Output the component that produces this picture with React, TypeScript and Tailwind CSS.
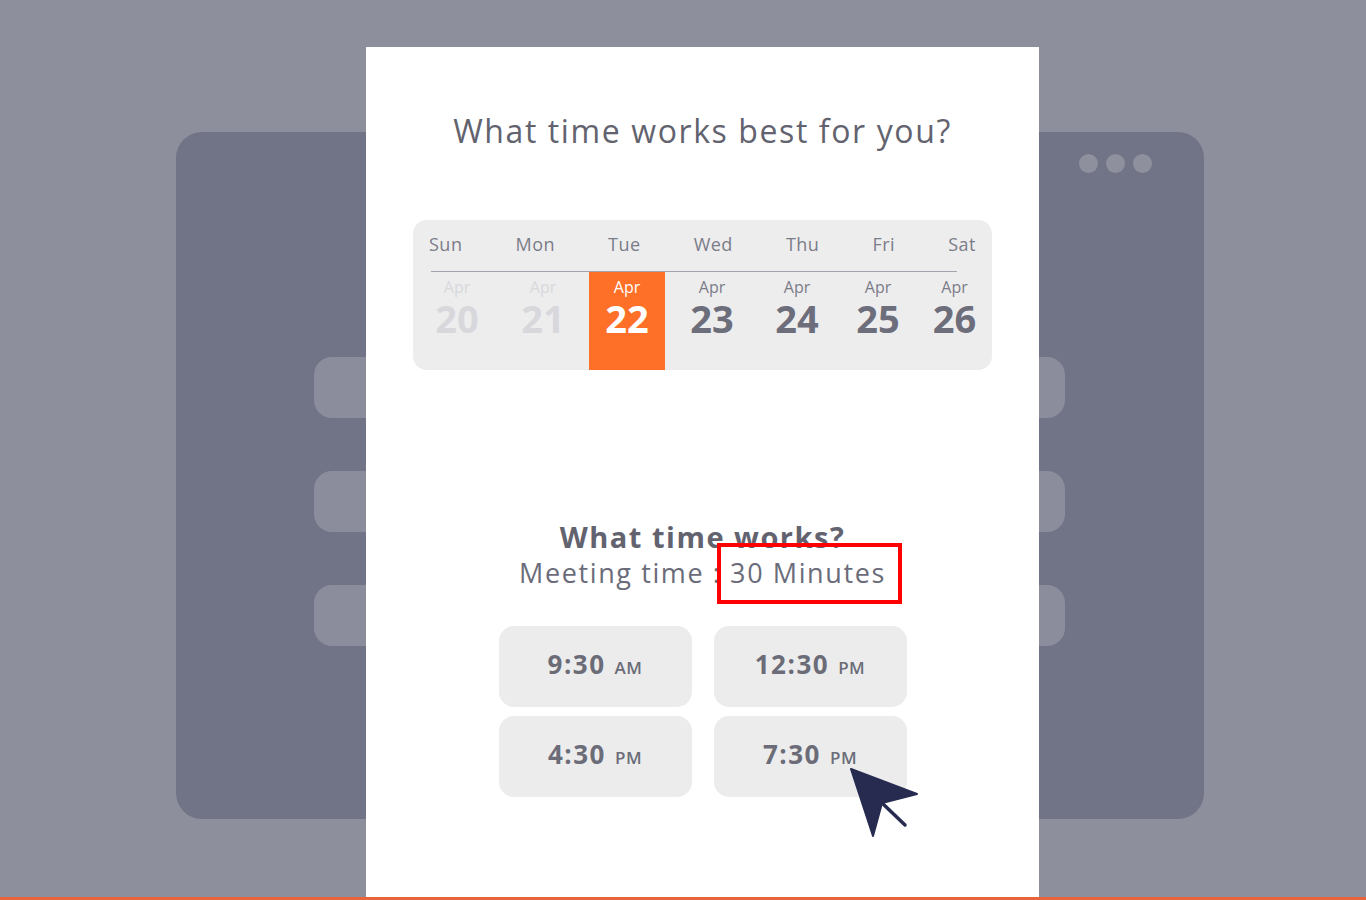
import React from "react";

const days = ["Sun", "Mon", "Tue", "Wed", "Thu", "Fri", "Sat"];

const dates = [
  { n: "20", state: "past" },
  { n: "21", state: "past" },
  { n: "22", state: "active" },
  { n: "23", state: "open" },
  { n: "24", state: "open" },
  { n: "25", state: "open" },
  { n: "26", state: "open" },
];

const slots = [
  { time: "9:30", ampm: "AM" },
  { time: "12:30", ampm: "PM" },
  { time: "4:30", ampm: "PM" },
  { time: "7:30", ampm: "PM" },
];

function Cursor() {
  return (
    <svg className="absolute left-[482px] top-[719px] w-[76px] h-[76px]" viewBox="0 0 76 76">
      <line x1="33" y1="36" x2="57" y2="59" stroke="#262b4f" strokeWidth="3.5" strokeLinecap="round" />
      <polygon points="3,3 69,28 34,37 25,70" fill="#262b4f" stroke="#262b4f" strokeWidth="2" strokeLinejoin="round" />
    </svg>
  );
}

export default function App() {
  return (
    <div
      className="relative h-[900px] w-full overflow-hidden bg-[#8e8f9c]"
      style={{ fontFamily: '"Open Sans", "Liberation Sans", sans-serif' }}
    >
      {/* backdrop window */}
      <div className="absolute left-[176px] top-[132px] w-[1028px] h-[687px] rounded-[26px] bg-[#717387]">
        <div className="absolute right-[52px] top-[22px] flex gap-[8px]">
          <span className="w-[19px] h-[19px] rounded-full bg-[#8e909e]" />
          <span className="w-[19px] h-[19px] rounded-full bg-[#8e909e]" />
          <span className="w-[19px] h-[19px] rounded-full bg-[#8e909e]" />
        </div>
        <div className="absolute left-[138px] top-[225px] flex flex-col gap-[53px]">
          <div className="w-[751px] h-[61px] rounded-[18px] bg-[#8c8d9c]" />
          <div className="w-[751px] h-[61px] rounded-[18px] bg-[#8c8d9c]" />
          <div className="w-[751px] h-[61px] rounded-[18px] bg-[#8c8d9c]" />
        </div>
      </div>

      <div className="pt-[47px] pl-[366px]">
        <div className="relative w-[673px] h-[853px] bg-white flex flex-col items-center">
          <h1 className="pt-[66px] text-[32px] leading-[36px] font-medium tracking-[1.6px] text-[#62636f]">
            What time works best for you?
          </h1>

          {/* calendar */}
          <div className="mt-[71px] w-[579px] h-[150px] rounded-[14px] bg-[#ededee] overflow-hidden">
            <div className="flex justify-between px-[16px] pt-[12px] pb-[15px] text-[18px] leading-[24px] tracking-[0.5px] text-[#7b7c88]">
              {days.map((d) => (
                <span key={d}>{d}</span>
              ))}
            </div>
            <div className="ml-[18px] mr-[35px] h-px bg-[#a3a4ad]" />
            <div className="grid grid-cols-[88px_84px_84px_86px_84px_78px_75px] h-[98px]">
              {dates.map((d) => (
                <div
                  key={d.n}
                  className={
                    d.state === "active"
                      ? "mx-[4px] bg-[#fe6f27] flex flex-col items-center text-white"
                      : d.state === "past"
                      ? "flex flex-col items-center text-[#d8d8dc]"
                      : "flex flex-col items-center text-[#6d6e7b]"
                  }
                >
                  <span
                    className={
                      d.state === "open"
                        ? "mt-[6px] text-[16px] leading-[18px] text-[#7b7c88]"
                        : "mt-[6px] text-[16px] leading-[18px]"
                    }
                  >
                    Apr
                  </span>
                  <span className="mt-[2px] text-[38px] leading-[40px] font-bold">{d.n}</span>
                </div>
              ))}
            </div>
          </div>

          <h2 className="mt-[150px] text-[29px] leading-[34px] font-bold tracking-[1.5px] text-[#62636f]">
            What time works?
          </h2>
          <p className="mt-[3px] text-[27px] leading-[32px] font-medium tracking-[1.6px] text-[#6b6c7a]">
            Meeting time : 30 Minutes
          </p>

          <div className="mt-[37px] grid grid-cols-[193px_193px] gap-x-[22px] gap-y-[9px]">
            {slots.map((s) => (
              <button
                key={s.time}
                type="button"
                className="h-[81px] rounded-[15px] bg-[#ececed] flex items-baseline justify-center gap-[9px] pt-[22px] text-[#6b6c78]"
              >
                <span className="text-[26px] leading-[32px] font-bold tracking-[1.5px]">{s.time}</span>
                <span className="text-[17px] font-semibold tracking-[0.5px]">{s.ampm}</span>
              </button>
            ))}
          </div>

          {/* highlight box */}
          <div className="absolute left-[351px] top-[496px] w-[185px] h-[61px] border-[4px] border-[#ff0000]" />
          <Cursor />
        </div>
      </div>

      <div className="absolute left-0 right-0 bottom-0 h-[3px] bg-[#e8653b]" />
    </div>
  );
}
